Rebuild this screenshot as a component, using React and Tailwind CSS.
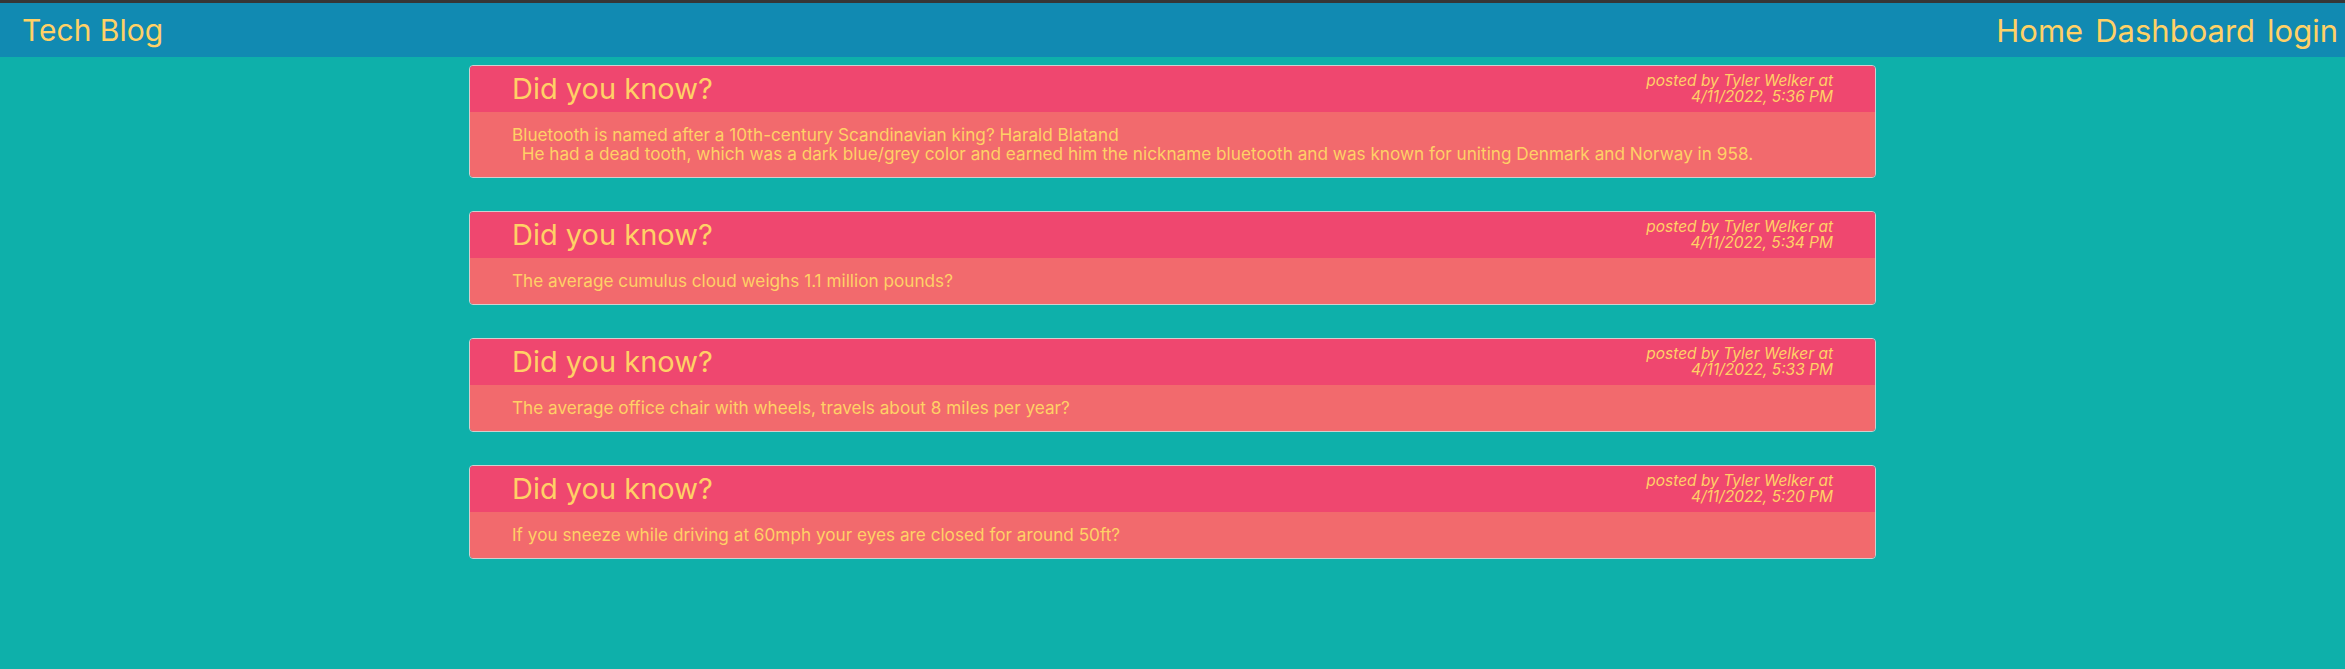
const posts = [
  {
    id: 1,
    title: 'Did you know?',
    author: 'Tyler Welker',
    date: '4/11/2022, 5:36 PM',
    body: 'Bluetooth is named after a 10th-century Scandinavian king? Harald Blatand\n  He had a dead tooth, which was a dark blue/grey color and earned him the nickname bluetooth and was known for uniting Denmark and Norway in 958.',
  },
  {
    id: 2,
    title: 'Did you know?',
    author: 'Tyler Welker',
    date: '4/11/2022, 5:34 PM',
    body: 'The average cumulus cloud weighs 1.1 million pounds?',
  },
  {
    id: 3,
    title: 'Did you know?',
    author: 'Tyler Welker',
    date: '4/11/2022, 5:33 PM',
    body: 'The average office chair with wheels, travels about 8 miles per year?',
  },
  {
    id: 4,
    title: 'Did you know?',
    author: 'Tyler Welker',
    date: '4/11/2022, 5:20 PM',
    body: 'If you sneeze while driving at 60mph your eyes are closed for around 50ft?',
  },
];

function PostCard({ post }) {
  return (
    <article className="w-3/5 mx-auto border border-[#cfcfcf] rounded overflow-hidden">
      <div className="h-[46px] bg-[#ef476f] flex items-center justify-between px-[42px]">
        <h2 className="text-[29px] leading-[34px]">{post.title}</h2>
        <p className="text-[15.5px] leading-[16px] italic text-right">
          posted by {post.author} at
          <br />
          {post.date}
        </p>
      </div>
      <div className="bg-[#f26a6d] px-[42px] pt-[13px] pb-[14px] text-[17.2px] leading-[19px] whitespace-pre-wrap">
        {post.body}
      </div>
    </article>
  );
}

export default function App() {
  return (
    <div className="min-h-screen bg-[#0eb0aa] text-[#ffd166] [font-family:Inter,'Liberation_Sans',sans-serif]">
      <header className="h-[57px] border-t-[3px] border-[#363636] bg-[#118ab2] flex items-center justify-between pl-[22px] pr-[7px]">
        <a href="#" className="text-[30px] leading-none">Tech Blog</a>
        <nav className="flex gap-[12px] text-[31px] leading-none">
          <a href="#">Home</a>
          <a href="#">Dashboard</a>
          <a href="#">login</a>
        </nav>
      </header>
      <main className="pt-[8px] flex flex-col gap-[33px]">
        {posts.map((post) => (
          <PostCard key={post.id} post={post} />
        ))}
      </main>
    </div>
  );
}
